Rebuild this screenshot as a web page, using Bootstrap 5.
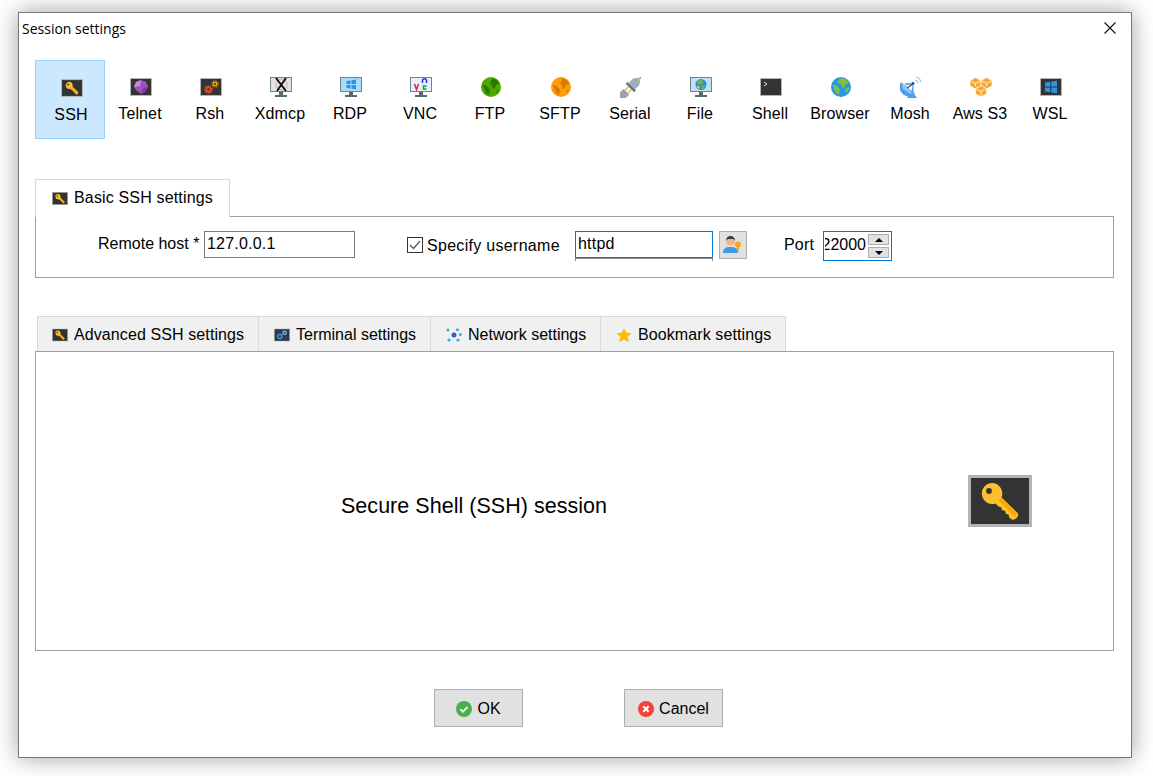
<!DOCTYPE html>
<html lang="en">
<head>
<meta charset="utf-8">
<title>Session settings</title>
<link href="https://cdn.jsdelivr.net/npm/bootstrap@5.3.0/dist/css/bootstrap.min.css" rel="stylesheet">
<style>
html,body{height:100%;background:#fff;overflow:hidden}
body{font-family:"Liberation Sans",Arial,sans-serif;font-size:16px;line-height:18px;color:#000}
.stage{padding:12px 21px 0 18px}
.dlg{height:746px;background:#fff;border:1px solid #777;box-shadow:0 0 22px rgba(0,0,0,.38);padding:0 17px 0 16px}
.ttl{height:47px;margin:0 0 0 -16px;padding:6px 0 0 3px}
.ttl-txt{font-family:"Open Sans",sans-serif;font-size:14px;line-height:19px}
.x-btn{margin:2px -3px 0 0;width:14px;height:14px;display:block}
.tools{height:79px}
.tool{width:70px;height:79px;padding:15px 0 0 2px;text-align:center;border:1px solid transparent}
.tool svg{display:block;margin:0 auto}
.tool span{display:block;white-space:nowrap;margin-left:-7px;margin-right:-5px;letter-spacing:.12px}
.tool svg.i18{width:22px;height:18px;margin-top:2px}
.tool svg.i20{width:22px;height:20px;margin-top:1px}
.tool svg.g20{width:20px;height:20px;margin-top:1px}
.tool svg.i22{width:22px;height:22px;margin-top:0}
.tool svg.i18+span{margin-top:9px}
.tool svg.i20+span,.tool svg.g20+span{margin-top:8px}
.tool svg.i22+span{margin-top:7px}
.tool.on{background:#cce8ff;border-color:#99d1ff}
.tool.on svg{transform:translate(1px,1px)}
.tool.on span{transform:translate(1px,1px)}
.tabs1{margin-top:40px;height:38px;position:relative;z-index:1}
.tab1{width:195px;height:38px;background:#fff;border:1px solid #d9d9d9;border-bottom:0;padding:9px 0 0 16px}
.wider{letter-spacing:.16px}
.wide2{letter-spacing:.1px}
.tabico{width:16px;height:13px;flex:none;display:block;margin-right:6px}
.tab1 .tabico{margin-top:3px}
.pane1{margin-top:-1px;height:62px;border:1px solid #a0a0a0;padding:14px 0 0 62px}
.lbl-rh{width:102px;margin-right:4px;padding-top:4px;white-space:nowrap}
.fld{height:27px;border:1px solid #7a7a7a;border-radius:0;padding:0 2px 1px;font-size:16px;line-height:18px;color:#000;font-family:inherit;background:#fff;letter-spacing:.2px}
.fld:focus{box-shadow:none}
.fld.host{width:151px}
.chk{margin:6px 0 0 52px;flex:none}
.chk-txt{margin-left:4px;padding-top:6px;width:133px;white-space:nowrap;letter-spacing:.3px}
.userwrap{margin-left:15px;width:138px;height:30px}
.fld.user{width:138px;border-color:#0078d7}
.userwrap i{display:block;height:3px;margin-top:0;border:1px solid #8a8a8a;border-bottom:0}
.pick{margin-left:6px;width:28px;height:28px;padding:0;background:#e1e1e1;border:1px solid #adadad;border-radius:0;display:flex;align-items:center;justify-content:center}
.port{margin-left:37px;width:31px;padding-top:5px;letter-spacing:.2px}
.spin{margin-left:8px;width:69px;height:30px;border:1px solid #0078d7;padding:2px 2px 0 1px}
.spinval{width:41px;overflow:hidden;direction:rtl;white-space:nowrap;padding-top:2px}
.arrows{margin-left:2px;width:21px}
.arrow{height:11px;background:#e1e1e1;border:1px solid #adadad;display:flex;align-items:center;justify-content:center}
.arrow+.arrow{margin-top:2px}
.tri-u{width:0;height:0;border:4px solid transparent;border-top:0;border-bottom:4px solid #000}
.tri-d{width:0;height:0;border:4px solid transparent;border-bottom:0;border-top:4px solid #000}
.tabs2{margin:38px 0 0 2px;height:35px;width:749px}
.tab2{height:36px;background:#f0f0f0;border:1px solid #d9d9d9;border-left:0;border-bottom:0;padding:9px 0 0 15px}
.tab2:first-child{border-left:1px solid #d9d9d9;padding-left:14px}
.t-a{width:222px}.t-b{width:172px}.t-c{width:170px}.t-d{width:185px}
.tab2 .tabico{height:14px;margin-top:2px}
.pane2{height:300px;border:1px solid #a0a0a0;padding-left:305px;padding-top:123px}
.big{font-size:21.5px;line-height:24px;width:627px;padding-top:19px;letter-spacing:.03px}
.bigico{width:64px;height:52px;display:block}
.acts{margin-top:38px;padding-left:399px}
.act{height:38px;background:#e1e1e1;border:1px solid #adadad;border-radius:0;padding:1px 0 0;font-size:16px;color:#000;display:flex;align-items:center;justify-content:center;line-height:18px}
.act svg{width:16px;height:16px;margin-right:5px}
.a-ok{width:89px}
.a-no{width:99px;margin-left:101px}
.tabs1,.tabs2,.pane1,.pane2{box-sizing:border-box}
</style>
</head>
<body>
<svg width="0" height="0" class="position-absolute">
<defs>
<symbol id="key" viewBox="0 0 64 52">
<rect width="64" height="52" fill="#b5b5b5"/><rect x="3" y="3" width="58" height="46" fill="#333"/>
<path fill="#fbc02d" d="M24 8A10.500 10.500 0 0 1 33.500 22.500L50 38.500Q51 41 48 43.500L45 45 41.500 43 40.500 39.500 38 39 37 36 34 35 33 32 30.500 31.500 27.500 28.500A10.500 10.500 0 1 1 24 8z"/>
<path fill="#f5a90f" d="M33.500 22.500 50 38.500 47 42 30.500 25.500z"/>
<circle cx="21" cy="16" r="2.900" fill="#333"/>
</symbol>
<symbol id="gem" viewBox="0 0 22 18">
<rect width="22" height="18" fill="#b5b5b5"/><rect x="1" y="1" width="20" height="16" fill="#333"/>
<path fill="#a24fc4" d="M11 2 16 4 18 9 15 14 11 16 7 13 4 9 6 4z"/><path fill="#c98be0" d="M11 2 6 4 4 9 10 8z"/><path fill="#7e3a9e" d="M18 9 15 14 11 16 13 10z"/>
</symbol>
<symbol id="gears" viewBox="0 0 22 18">
<rect width="22" height="18" fill="#b5b5b5"/><rect x="1" y="1" width="20" height="16" fill="#333"/>
<circle cx="8.500" cy="11.500" r="2.200" fill="none" stroke="#e5521b" stroke-width="1.800"/><circle cx="8.500" cy="11.500" r="3.800" fill="none" stroke="#e5521b" stroke-width="1.400" stroke-dasharray="1.400 1.300"/>
<circle cx="15" cy="6" r="1.700" fill="none" stroke="#f5a100" stroke-width="1.400"/><circle cx="15" cy="6" r="3" fill="none" stroke="#f5a100" stroke-width="1.200" stroke-dasharray="1.200 1.150"/>
</symbol>
<symbol id="gears2" viewBox="0 0 22 18">
<rect width="22" height="18" fill="#b5b5b5"/><rect x="1" y="1" width="20" height="16" fill="#2e3a4d"/>
<circle cx="8" cy="11" r="2.800" fill="none" stroke="#3f8fe0" stroke-width="2.200"/>
<circle cx="14.500" cy="6" r="2.200" fill="none" stroke="#7fb6ef" stroke-width="1.800"/>
</symbol>
<symbol id="mon" viewBox="0 0 22 20">
<rect x="0" y="0" width="22" height="15" fill="#6e8591"/><rect x="1" y="1" width="20" height="13" fill="#bfe0f7"/>
<rect x="9" y="15" width="4" height="3" fill="#55696f"/><rect x="5" y="18" width="12" height="2" fill="#55696f"/>
</symbol>
<symbol id="xmon" viewBox="0 0 22 20">
<use href="#mon"/><rect x="1" y="1" width="20" height="13" fill="#dfe6ea"/>
<circle cx="11.500" cy="7.500" r="5.500" fill="none" stroke="#e8a27a"/>
<path d="M6 1 16 14M16 1 7 14" stroke="#111" stroke-width="2"/>
</symbol>
<symbol id="winmon" viewBox="0 0 22 20">
<use href="#mon"/><rect x="1" y="1" width="20" height="13" fill="#a9dcfb"/>
<path fill="#2a94e6" d="M6.500 4 10.500 3.400V7H6.500zM11.500 3.300 16 2.600V7H11.500zM6.500 8H10.500V11.500L6.500 11zM11.500 8H16V12.300L11.500 11.700z"/>
</symbol>
<symbol id="vncmon" viewBox="0 0 22 20">
<use href="#mon"/><rect x="1" y="1" width="20" height="13" fill="#e4f0fa"/>
<path d="M4.500 7 6.500 12.500 8.500 7" fill="none" stroke="#e5202e" stroke-width="1.500"/>
<path d="M12.500 6V3.800a2 2 0 0 1 4 0V6" fill="none" stroke="#3333dd" stroke-width="1.500"/>
<path d="M16.500 9H13.500V12H16.500" fill="none" stroke="#18a02c" stroke-width="1.500"/>
</symbol>
<symbol id="globeg" viewBox="0 0 20 20">
<circle cx="10" cy="10" r="10" fill="#4fa800"/>
<path fill="#2c7406" d="M11 1.500 16 3 18 7 15 8 14 11 11.500 12 11 8 9 7 10 4zM1.500 8 5 8.500 9 12.500 8 18 5.500 16.500 3.500 12zM15 14 17.500 12.500 16 16.500z"/>
</symbol>
<symbol id="globeo" viewBox="0 0 20 20">
<circle cx="10" cy="10" r="10" fill="#ff9c0a"/>
<path fill="#d97b00" d="M11 1.500 16 3 18 7 15 8 14 11 11.500 12 11 8 9 7 10 4zM1.500 8 5 8.500 9 12.500 8 18 5.500 16.500 3.500 12zM15 14 17.500 12.500 16 16.500z"/>
</symbol>
<symbol id="plug" viewBox="0 0 22 22">
<g transform="rotate(-45 11 11)">
<path fill="#96a5ad" d="M-4 7H4.500V15H-4z"/><rect x="-5" y="7" width="3" height="8" rx="1" fill="#96a5ad"/>
<rect x="4.500" y="8.300" width="5" height="1.500" fill="#f1c232"/><rect x="4.500" y="12.200" width="5" height="1.500" fill="#f1c232"/>
<rect x="9.500" y="5" width="2.500" height="12" fill="#5f7480"/>
<path fill="#a0aeb5" d="M12 6.500H18L22 9V13L18 15.500H12z"/><rect x="22" y="10" width="3" height="2" fill="#a0aeb5"/>
</g>
</symbol>
<symbol id="filemon" viewBox="0 0 22 20">
<use href="#mon"/><rect x="1" y="1" width="20" height="13" fill="#bfe0f7"/>
<circle cx="11" cy="7.500" r="5.500" fill="#2b8fd8"/><path fill="#7cb342" d="M8 3 12 3 13 6 10 8 7 6zM12 9 15 8 14 12 12 12z"/><path fill="#f5c242" d="M7 8 10 10 9 12 7 11z"/>
</symbol>
<symbol id="term" viewBox="0 0 22 18">
<rect width="22" height="18" fill="#b5b5b5"/><rect x="1" y="1" width="20" height="16" fill="#333"/>
<path d="M4 4 7 6 4 8" fill="none" stroke="#ddd"/>
</symbol>
<symbol id="globeb" viewBox="0 0 20 20">
<circle cx="10" cy="10" r="10" fill="#2a94e6"/>
<path fill="#7cc142" d="M9 1 15 2 18 6 14 8 13.500 11 10.500 10 10 7 6 5.500zM1.500 8 6 8.500 9 12 8 18 5 16 3 12zM15 11 18.500 10 17 15 14 15z"/>
</symbol>
<symbol id="dish" viewBox="0 0 22 22">
<path fill="#4a9fe8" d="M1 6 15.500 18A9.500 9.500 0 0 1 1 6z"/>
<path fill="#8cc6f4" d="M1 6 15.500 18 12.500 19.500 3 13z"/>
<path d="M7 12 13 8" stroke="#1b4f80" stroke-width="1.200"/><path d="M5 8H13" stroke="#1b4f80"/><path d="M13 8V18L16.500 21.500H7.500L11 18" fill="#4a9fe8" stroke="#4a9fe8" stroke-width="1"/>
<circle cx="13" cy="7.500" r="1.400" fill="#1b4f80"/>
<path d="M15 4a4 4 0 0 1 3 3M16 1a7 7 0 0 1 5 5" fill="none" stroke="#8cc6f4" stroke-width="1.200"/>
</symbol>
<symbol id="aws" viewBox="0 0 22 20">
<g fill="#f7a833" stroke="#fff" stroke-width=".7">
<path d="M0 3.500 5.500 .5 11 3.500V9L5.500 12 0 9z"/><path d="M11 3.500 16.500 .5 22 3.500V9L16.500 12 11 9z"/><path d="M5.500 11.500 11 8.500 16.500 11.500V17L11 20 5.500 17z"/>
</g>
<path d="M0 3.500 5.500 6.500 11 3.500M5.500 6.500V9M11 3.500 16.500 6.500 22 3.500M16.500 6.500V9M5.500 11.500 11 14.500 16.500 11.500M11 14.500V20" fill="none" stroke="#fff" stroke-width=".8"/>
</symbol>
<symbol id="wsl" viewBox="0 0 22 18">
<rect width="22" height="18" fill="#b5b5b5"/><rect x="1" y="1" width="20" height="16" fill="#333"/>
<path fill="#2a94e6" d="M5 4.500 10.300 3.700V8.500H5zM11.300 3.600 17 2.800V8.500H11.300zM5 9.500H10.300V14.300L5 13.500zM11.300 9.500H17V15.200L11.300 14.400z"/>
</symbol>
<symbol id="net" viewBox="0 0 16 14">
<g fill="#2bb5d8"><circle cx="2" cy="2" r="1.500"/><circle cx="11.500" cy="1.800" r="1.500"/><circle cx="14.300" cy="6.500" r="1.500"/><circle cx="3" cy="12" r="1.600"/><circle cx="12" cy="12" r="1.600"/></g>
<circle cx="8" cy="7" r="2.500" fill="#4257c4"/>
</symbol>
<symbol id="star" viewBox="0 0 17 15">
<path fill="#f6c000" d="M8.500 0 11 5 16.500 5.700 12.500 9.500 13.600 15 8.500 12.300 3.400 15 4.500 9.500 .5 5.700 6 5z"/>
</symbol>
<symbol id="ok" viewBox="0 0 16 16"><circle cx="8" cy="8" r="8" fill="#4caf50"/><path d="M4.500 8.300 7 10.700 11.500 6" fill="none" stroke="#fff" stroke-width="1.800"/></symbol>
<symbol id="no" viewBox="0 0 16 16"><circle cx="8" cy="8" r="8" fill="#f44336"/><path d="M5.300 5.300 10.700 10.700M10.700 5.300 5.300 10.700" stroke="#fff" stroke-width="2"/></symbol>
</defs>
</svg>
<div class="stage">
<div class="dlg d-flex flex-column">
  <div class="ttl d-flex justify-content-between">
    <div class="ttl-txt">Session settings</div>
    <svg class="x-btn" viewBox="0 0 14 14"><path d="M1.500 1.500 12.500 12.500M12.500 1.500 1.500 12.500" stroke="#111" stroke-width="1.100"/></svg>
  </div>
  <div class="tools d-flex">
    <div class="tool on"><svg class="i18" viewBox="0 0 64 52"><use href="#key"/></svg><span>SSH</span></div>
    <div class="tool"><svg class="i18" viewBox="0 0 22 18"><use href="#gem"/></svg><span>Telnet</span></div>
    <div class="tool"><svg class="i18" viewBox="0 0 22 18"><use href="#gears"/></svg><span>Rsh</span></div>
    <div class="tool"><svg class="i20" viewBox="0 0 22 20"><use href="#xmon"/></svg><span>Xdmcp</span></div>
    <div class="tool"><svg class="i20" viewBox="0 0 22 20"><use href="#winmon"/></svg><span>RDP</span></div>
    <div class="tool"><svg class="i20" viewBox="0 0 22 20"><use href="#vncmon"/></svg><span>VNC</span></div>
    <div class="tool"><svg class="g20" viewBox="0 0 20 20"><use href="#globeg"/></svg><span>FTP</span></div>
    <div class="tool"><svg class="g20" viewBox="0 0 20 20"><use href="#globeo"/></svg><span>SFTP</span></div>
    <div class="tool"><svg class="i22" viewBox="0 0 22 22"><use href="#plug"/></svg><span>Serial</span></div>
    <div class="tool"><svg class="i20" viewBox="0 0 22 20"><use href="#filemon"/></svg><span>File</span></div>
    <div class="tool"><svg class="i18" viewBox="0 0 22 18"><use href="#term"/></svg><span>Shell</span></div>
    <div class="tool"><svg class="g20" viewBox="0 0 20 20"><use href="#globeb"/></svg><span>Browser</span></div>
    <div class="tool"><svg class="i22" viewBox="0 0 22 22"><use href="#dish"/></svg><span>Mosh</span></div>
    <div class="tool"><svg class="i20" viewBox="0 0 22 20"><use href="#aws"/></svg><span>Aws S3</span></div>
    <div class="tool"><svg class="i18" viewBox="0 0 22 18"><use href="#wsl"/></svg><span>WSL</span></div>
  </div>

  <div class="tabs1 d-flex">
    <div class="tab1 d-flex"><svg class="tabico" viewBox="0 0 64 52"><use href="#key"/></svg><span class="wider">Basic SSH settings</span></div>
  </div>
  <div class="pane1 d-flex align-items-start">
    <div class="lbl-rh">Remote host *</div>
    <input class="form-control fld host" value="127.0.0.1" aria-label="Remote host">
    <svg class="chk" width="16" height="16" viewBox="0 0 16 16"><rect x=".5" y=".5" width="15" height="15" fill="#fff" stroke="#333"/><path d="M3 8 6.500 11.500 13 4" fill="none" stroke="#555" stroke-width="1.200"/></svg>
    <div class="chk-txt">Specify username</div>
    <div class="userwrap"><input class="form-control fld user" value="httpd" aria-label="Username"><i></i></div>
    <button type="button" class="btn pick" aria-label="Pick user">
      <svg width="22" height="20" viewBox="0 0 22 20"><circle cx="8.500" cy="6" r="4.500" fill="#f0b88a"/><path d="M4 5.500a4.500 4.500 0 0 1 9 0L11 4H6z" fill="#3b3b3b"/><path fill="#3d9be0" d="M1 18C1 13 4 12 8.500 12S16 13 16 18z"/><circle cx="16" cy="9.500" r="3" fill="#f5a623"/><rect x="15" y="11" width="2" height="6" fill="#f5a623"/></svg>
    </button>
    <div class="port">Port</div>
    <div class="spin d-flex">
      <div class="spinval"><span dir="ltr">22000</span></div>
      <div class="arrows"><div class="arrow"><b class="tri-u"></b></div><div class="arrow"><b class="tri-d"></b></div></div>
    </div>
  </div>

  <div class="tabs2 d-flex">
    <div class="tab2 t-a d-flex"><svg class="tabico" viewBox="0 0 64 52"><use href="#key"/></svg><span class="wide2">Advanced SSH settings</span></div>
    <div class="tab2 t-b d-flex"><svg class="tabico" viewBox="0 0 22 18"><use href="#gears2"/></svg><span>Terminal settings</span></div>
    <div class="tab2 t-c d-flex"><svg class="tabico" viewBox="0 0 16 14"><use href="#net"/></svg><span>Network settings</span></div>
    <div class="tab2 t-d d-flex"><svg class="tabico" viewBox="0 0 17 15"><use href="#star"/></svg><span class="wide2">Bookmark settings</span></div>
  </div>
  <div class="pane2 d-flex align-items-start">
    <div class="big">Secure Shell (SSH) session</div>
    <svg class="bigico" viewBox="0 0 64 52"><use href="#key"/></svg>
  </div>

  <div class="acts d-flex">
    <button type="button" class="btn act a-ok"><svg viewBox="0 0 16 16"><use href="#ok"/></svg>OK</button>
    <button type="button" class="btn act a-no"><svg viewBox="0 0 16 16"><use href="#no"/></svg>Cancel</button>
  </div>
</div>
</div>
</body>
</html>
